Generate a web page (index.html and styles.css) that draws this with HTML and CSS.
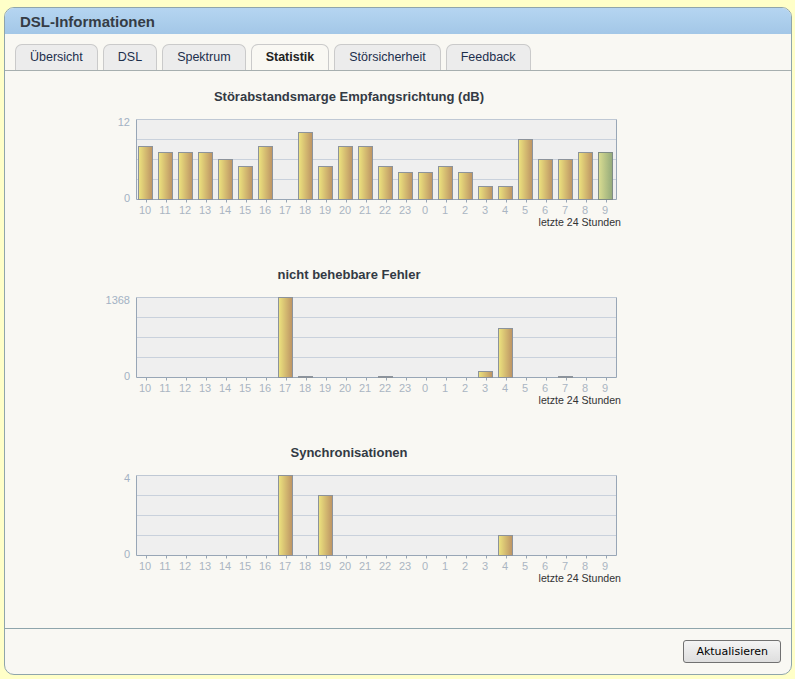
FILE: index.html
```html
<!DOCTYPE html>
<html lang="de">
<head>
<meta charset="utf-8">
<title>DSL-Informationen</title>
<link rel="stylesheet" href="styles.css">
</head>
<body>
<div class="panel">
  <div class="header">DSL-Informationen</div>
  <div class="tabs">
    <div class="tab">Übersicht</div>
    <div class="tab">DSL</div>
    <div class="tab">Spektrum</div>
    <div class="tab active">Statistik</div>
    <div class="tab">Störsicherheit</div>
    <div class="tab">Feedback</div>
  </div>
  <div class="content">
    <div class="chart">
      <div class="chart-title">Störabstandsmarge Empfangsrichtung (dB)</div>
      <svg class="plot" width="546" height="91" viewBox="0 0 546 91">
        <defs>
          <linearGradient id="gold" x1="0" x2="1" y1="0" y2="0">
            <stop offset="0" stop-color="#ede47f"/>
            <stop offset="1" stop-color="#bc9263"/>
          </linearGradient>
          <linearGradient id="green" x1="0" x2="1" y1="0" y2="0">
            <stop offset="0" stop-color="#dadd92"/>
            <stop offset="1" stop-color="#93a97a"/>
          </linearGradient>
        </defs>
        <rect class="bg" x="60.5" y="6.5" width="480" height="80"/>
        <path class="grid" d="M61 26.5H540M61 46.5H540M61 66.5H540"/>
        <path class="frame-top" d="M60.5 6.5H540.5"/>
        <path class="frame" d="M540.5 6.5V86.5H60.5V6.5"/>
        <path class="ticks" d="M70.5 86.5v3M90.5 86.5v3M110.5 86.5v3M130.5 86.5v3M150.5 86.5v3M170.5 86.5v3M190.5 86.5v3M210.5 86.5v3M230.5 86.5v3M250.5 86.5v3M270.5 86.5v3M290.5 86.5v3M310.5 86.5v3M330.5 86.5v3M350.5 86.5v3M370.5 86.5v3M390.5 86.5v3M410.5 86.5v3M430.5 86.5v3M450.5 86.5v3M470.5 86.5v3M490.5 86.5v3M510.5 86.5v3M530.5 86.5v3"/>
        <text class="ylabel" x="54" y="13">12</text>
        <text class="ylabel" x="54" y="89">0</text>
        <rect class="bar" x="62.5" y="33.5" width="14" height="53"/>
        <rect class="bar" x="82.5" y="39.5" width="14" height="47"/>
        <rect class="bar" x="102.5" y="39.5" width="14" height="47"/>
        <rect class="bar" x="122.5" y="39.5" width="14" height="47"/>
        <rect class="bar" x="142.5" y="46.5" width="14" height="40"/>
        <rect class="bar" x="162.5" y="53.5" width="14" height="33"/>
        <rect class="bar" x="182.5" y="33.5" width="14" height="53"/>
        <rect class="bar" x="222.5" y="19.5" width="14" height="67"/>
        <rect class="bar" x="242.5" y="53.5" width="14" height="33"/>
        <rect class="bar" x="262.5" y="33.5" width="14" height="53"/>
        <rect class="bar" x="282.5" y="33.5" width="14" height="53"/>
        <rect class="bar" x="302.5" y="53.5" width="14" height="33"/>
        <rect class="bar" x="322.5" y="59.5" width="14" height="27"/>
        <rect class="bar" x="342.5" y="59.5" width="14" height="27"/>
        <rect class="bar" x="362.5" y="53.5" width="14" height="33"/>
        <rect class="bar" x="382.5" y="59.5" width="14" height="27"/>
        <rect class="bar" x="402.5" y="73.5" width="14" height="13"/>
        <rect class="bar" x="422.5" y="73.5" width="14" height="13"/>
        <rect class="bar" x="442.5" y="26.5" width="14" height="60"/>
        <rect class="bar" x="462.5" y="46.5" width="14" height="40"/>
        <rect class="bar" x="482.5" y="46.5" width="14" height="40"/>
        <rect class="bar" x="502.5" y="39.5" width="14" height="47"/>
        <rect class="bar current" x="522.5" y="39.5" width="14" height="47"/>
      </svg>
      <div class="xlabels"><span>10</span><span>11</span><span>12</span><span>13</span><span>14</span><span>15</span><span>16</span><span>17</span><span>18</span><span>19</span><span>20</span><span>21</span><span>22</span><span>23</span><span>0</span><span>1</span><span>2</span><span>3</span><span>4</span><span>5</span><span>6</span><span>7</span><span>8</span><span>9</span></div>
      <div class="caption">letzte 24 Stunden</div>
    </div>

    <div class="chart">
      <div class="chart-title">nicht behebbare Fehler</div>
      <svg class="plot" width="546" height="91" viewBox="0 0 546 91">
        <rect class="bg" x="60.5" y="6.5" width="480" height="80"/>
        <path class="grid" d="M61 26.5H540M61 46.5H540M61 66.5H540"/>
        <path class="frame-top" d="M60.5 6.5H540.5"/>
        <path class="frame" d="M540.5 6.5V86.5H60.5V6.5"/>
        <path class="ticks" d="M70.5 86.5v3M90.5 86.5v3M110.5 86.5v3M130.5 86.5v3M150.5 86.5v3M170.5 86.5v3M190.5 86.5v3M210.5 86.5v3M230.5 86.5v3M250.5 86.5v3M270.5 86.5v3M290.5 86.5v3M310.5 86.5v3M330.5 86.5v3M350.5 86.5v3M370.5 86.5v3M390.5 86.5v3M410.5 86.5v3M430.5 86.5v3M450.5 86.5v3M470.5 86.5v3M490.5 86.5v3M510.5 86.5v3M530.5 86.5v3"/>
        <text class="ylabel" x="54" y="13">1368</text>
        <text class="ylabel" x="54" y="89">0</text>
        <rect class="bar" x="202.5" y="6.5" width="14" height="80"/>
        <rect class="bar" x="222.5" y="85.5" width="14" height="1"/>
        <rect class="bar" x="302.5" y="85.5" width="14" height="1"/>
        <rect class="bar" x="402.5" y="80.5" width="14" height="6"/>
        <rect class="bar" x="422.5" y="37.5" width="14" height="49"/>
        <rect class="bar" x="482.5" y="85.5" width="14" height="1"/>
      </svg>
      <div class="xlabels"><span>10</span><span>11</span><span>12</span><span>13</span><span>14</span><span>15</span><span>16</span><span>17</span><span>18</span><span>19</span><span>20</span><span>21</span><span>22</span><span>23</span><span>0</span><span>1</span><span>2</span><span>3</span><span>4</span><span>5</span><span>6</span><span>7</span><span>8</span><span>9</span></div>
      <div class="caption">letzte 24 Stunden</div>
    </div>

    <div class="chart">
      <div class="chart-title">Synchronisationen</div>
      <svg class="plot" width="546" height="91" viewBox="0 0 546 91">
        <rect class="bg" x="60.5" y="6.5" width="480" height="80"/>
        <path class="grid" d="M61 26.5H540M61 46.5H540M61 66.5H540"/>
        <path class="frame-top" d="M60.5 6.5H540.5"/>
        <path class="frame" d="M540.5 6.5V86.5H60.5V6.5"/>
        <path class="ticks" d="M70.5 86.5v3M90.5 86.5v3M110.5 86.5v3M130.5 86.5v3M150.5 86.5v3M170.5 86.5v3M190.5 86.5v3M210.5 86.5v3M230.5 86.5v3M250.5 86.5v3M270.5 86.5v3M290.5 86.5v3M310.5 86.5v3M330.5 86.5v3M350.5 86.5v3M370.5 86.5v3M390.5 86.5v3M410.5 86.5v3M430.5 86.5v3M450.5 86.5v3M470.5 86.5v3M490.5 86.5v3M510.5 86.5v3M530.5 86.5v3"/>
        <text class="ylabel" x="54" y="13">4</text>
        <text class="ylabel" x="54" y="89">0</text>
        <rect class="bar" x="202.5" y="6.5" width="14" height="80"/>
        <rect class="bar" x="242.5" y="26.5" width="14" height="60"/>
        <rect class="bar" x="422.5" y="66.5" width="14" height="20"/>
      </svg>
      <div class="xlabels"><span>10</span><span>11</span><span>12</span><span>13</span><span>14</span><span>15</span><span>16</span><span>17</span><span>18</span><span>19</span><span>20</span><span>21</span><span>22</span><span>23</span><span>0</span><span>1</span><span>2</span><span>3</span><span>4</span><span>5</span><span>6</span><span>7</span><span>8</span><span>9</span></div>
      <div class="caption">letzte 24 Stunden</div>
    </div>
  </div>
  <div class="footer">
    <button class="btn" type="button">Aktualisieren</button>
  </div>
</div>
</body>
</html>
```

FILE: styles.css
```css
html, body {
  margin: 0;
  padding: 0;
}

body {
  background: #ffffc8;
  font-family: "Liberation Sans", Arial, sans-serif;
  color: #333;
}

.panel {
  margin: 7px 0 0 4px;
  width: 788px;
  height: 668px;
  box-sizing: border-box;
  border: 1px solid #8fa5ab;
  border-radius: 10px;
  background: #f9f8f3;
  display: flex;
  flex-direction: column;
  overflow: hidden;
}

.header {
  height: 26px;
  flex: none;
  background: linear-gradient(#b5d5f1, #a3c7e7);
  padding-left: 15px;
  font-size: 15px;
  font-weight: bold;
  line-height: 27px;
  color: #353c45;
}

.tabs {
  flex: none;
  display: flex;
  gap: 5px;
  padding: 10px 0 0 10px;
  border-bottom: 1px solid #a7afaf;
}

.tab {
  height: 25px;
  padding: 0 14px;
  border: 1px solid #cacaca;
  border-bottom: none;
  border-radius: 7px 7px 0 0;
  background: #ececec;
  font-size: 12.5px;
  line-height: 24px;
  color: #1d2f4c;
}

.tab.active {
  background: #f9f8f3;
  font-weight: bold;
  color: #222;
}

.content {
  flex: 1;
  padding-top: 18px;
  overflow: hidden;
}

.chart {
  width: 546px;
  margin: 0 0 38px 71px;
}

.chart-title {
  text-align: center;
  font-size: 13px;
  font-weight: bold;
  line-height: 16px;
  color: #333a44;
  margin-bottom: 8px;
}

.plot {
  display: block;
}

.plot .bg {
  fill: #efefef;
}

.plot .grid {
  stroke: #c9d1dc;
  stroke-width: 1;
  fill: none;
}

.plot .frame-top {
  stroke: #bfc8d4;
  fill: none;
}

.plot .frame {
  stroke: #98a6b6;
  fill: none;
}

.plot .ticks {
  stroke: #98a6b6;
  fill: none;
}

.plot .ylabel {
  font-family: "Liberation Sans", Arial, sans-serif;
  font-size: 11px;
  fill: #a3b2c4;
  text-anchor: end;
}

.plot .bar {
  fill: url(#gold);
  stroke: #8c939b;
  stroke-width: 1;
}

.plot .bar.current {
  fill: url(#green);
  stroke: #7f8c86;
}

.xlabels {
  display: flex;
  margin-left: 59px;
  height: 12px;
  font-size: 11px;
  line-height: 12px;
  color: #aab5c2;
}

.xlabels span {
  width: 20px;
  text-align: center;
}

.caption {
  text-align: right;
  padding-right: 1px;
  font-size: 10.6px;
  line-height: 13px;
  color: #333;
}

.footer {
  flex: none;
  height: 46px;
  border-top: 1px solid #8fa5ab;
  display: flex;
  justify-content: flex-end;
  align-items: flex-start;
  padding: 11px 10px 0 0;
  box-sizing: border-box;
}

.btn {
  height: 23px;
  padding: 0 12px;
  border: 1px solid #717171;
  border-radius: 3px;
  background: linear-gradient(#f4f4f4, #dedede);
  font-family: "DejaVu Sans", Verdana, sans-serif;
  font-size: 11px;
  color: #000;
  line-height: 21px;
}
```
